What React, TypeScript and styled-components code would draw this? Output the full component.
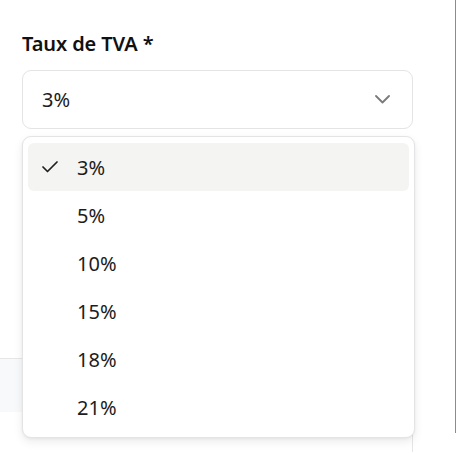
import { createGlobalStyle, styled } from "styled-components";

const GlobalStyle = createGlobalStyle`
  html, body {
    margin: 0;
    padding: 0;
    background: #ffffff;
  }
  body {
    font-family: "Noto Sans", "Open Sans", sans-serif;
    color: #1c1c1c;
  }
`;

const Page = styled.div`
  position: relative;
  width: 456px;
  height: 453px;
  overflow: hidden;
  background: #ffffff;
`;

const ScrollEdge = styled.div`
  position: absolute;
  top: 0;
  right: 0;
  width: 1px;
  height: 433px;
  background: #8c8c8c;
`;

const Form = styled.div`
  display: flex;
  flex-direction: column;
  padding: 29px 43px 0 22px;
`;

const Field = styled.div`
  display: flex;
  flex-direction: column;
  gap: 11px;
`;

const Label = styled.label`
  font-size: 20px;
  font-weight: 600;
  color: #111111;
  line-height: 30px;
  letter-spacing: -0.1px;
`;

const Trigger = styled.button`
  display: flex;
  align-items: center;
  justify-content: space-between;
  box-sizing: border-box;
  width: 391px;
  height: 59px;
  padding: 0 22px 0 19px;
  border: 1px solid #e4e4e4;
  border-radius: 9px;
  background: #ffffff;
  font-family: inherit;
  font-size: 20px;
  color: #1c1c1c;
  cursor: pointer;
`;

const Band = styled.div`
  margin-top: 229px;
  width: 413px;
  height: 53px;
  border-top: 1px solid #e6e6e6;
  background: #f8f9fa;
`;

const BandBelow = styled.div`
  width: 413px;
  height: 40px;
  border-right: 1px solid #e6e6e6;
  box-sizing: border-box;
`;

const Menu = styled.ul`
  position: absolute;
  top: 136px;
  left: 22px;
  box-sizing: border-box;
  width: 393px;
  margin: 0;
  padding: 6px 5px;
  list-style: none;
  background: #ffffff;
  border: 1px solid #e4e4e4;
  border-radius: 9px;
  box-shadow: 0 4px 10px rgba(0, 0, 0, 0.08), 0 1px 3px rgba(0, 0, 0, 0.05);
`;

const Item = styled.li<{ $selected?: boolean }>`
  display: flex;
  align-items: center;
  height: 48px;
  padding-left: 14px;
  border-radius: 6px;
  background: ${(p) => (p.$selected ? "#f4f4f2" : "transparent")};
  font-size: 20px;
  color: #1c1c1c;
`;

const CheckSlot = styled.span`
  display: flex;
  align-items: center;
  width: 35px;
`;

function CheckIcon() {
  return (
    <svg width="16" height="12" viewBox="0 0 16 12" fill="none">
      <polyline
        points="1,6 5.5,10.5 15,1"
        stroke="#1f1f1f"
        strokeWidth="1.7"
        strokeLinecap="round"
        strokeLinejoin="round"
      />
    </svg>
  );
}

function Chevron() {
  return (
    <svg width="15" height="9" viewBox="0 0 15 9" fill="none">
      <polyline
        points="1,1 7.5,7.5 14,1"
        stroke="#7a7a7a"
        strokeWidth="1.8"
        strokeLinecap="round"
        strokeLinejoin="round"
      />
    </svg>
  );
}

const rates = ["3%", "5%", "10%", "15%", "18%", "21%"];

export default function App() {
  const selected = "3%";
  return (
    <>
      <GlobalStyle />
      <Page>
        <ScrollEdge />
        <Form>
          <Field>
            <Label>Taux de TVA *</Label>
            <Trigger>
              <span>{selected}</span>
              <Chevron />
            </Trigger>
          </Field>
        </Form>
        <Band />
        <BandBelow />
        <Menu>
          {rates.map((r) => (
            <Item key={r} $selected={r === selected}>
              <CheckSlot>{r === selected && <CheckIcon />}</CheckSlot>
              {r}
            </Item>
          ))}
        </Menu>
      </Page>
    </>
  );
}
